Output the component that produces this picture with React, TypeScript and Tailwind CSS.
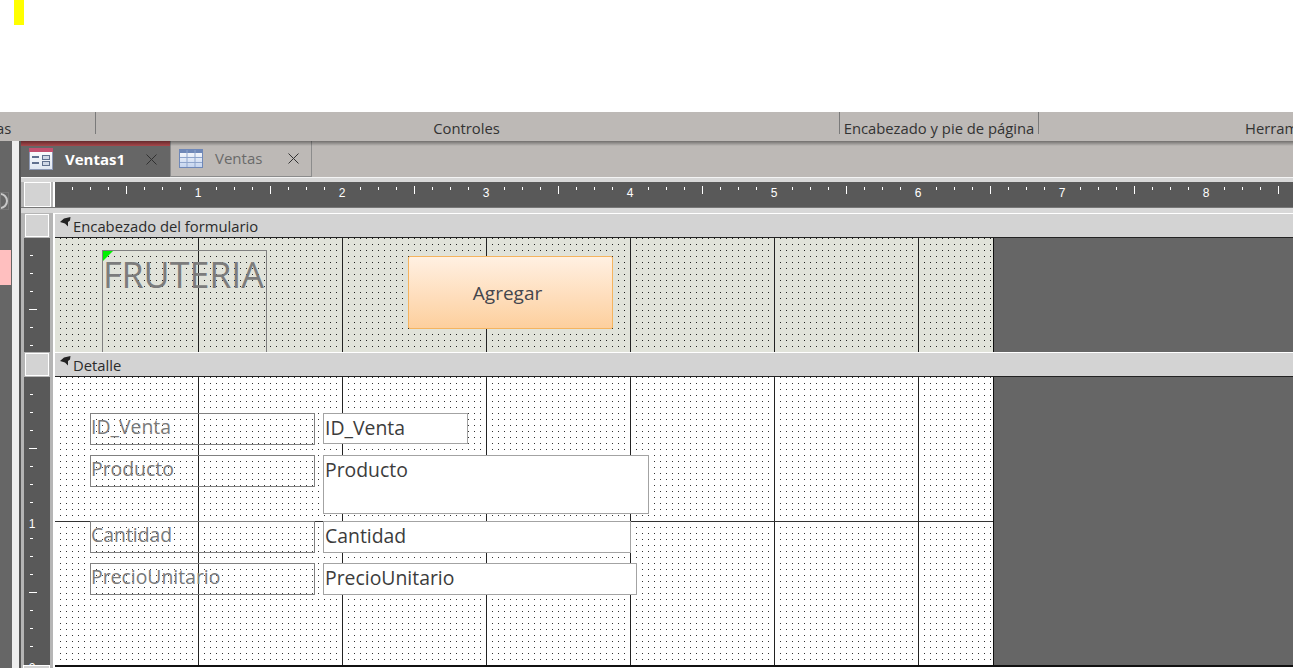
import React from "react";

const ui = "font-['Open_Sans','Noto_Sans',sans-serif]";
const dotsWhite =
  "bg-[linear-gradient(to_right,#ffffff_5px,transparent_5px),linear-gradient(to_bottom,#333333_1px,#ffffff_1px)] bg-[size:6px_6px]";
const dotsGreen =
  "bg-[linear-gradient(to_right,#e1e3da_5px,transparent_5px),linear-gradient(to_bottom,#222222_1px,#e1e3da_1px)] bg-[size:6px_6px]";

function TopRuler() {
  const ticks: React.ReactNode[] = [];
  for (let x = 72; x < 1293; x += 18) {
    const i = (x - 54) / 18;
    if (i % 8 === 0) {
      ticks.push(
        <text key={x} x={x - 55} y={15} fill="#fff" fontSize="12" textAnchor="middle" fontFamily="Liberation Sans, sans-serif">
          {(x - 54) / 144}
        </text>
      );
    } else if (i % 4 === 0) {
      ticks.push(<rect key={x} x={x - 55} y={4} width={1} height={8} fill="#fff" />);
    } else {
      ticks.push(<rect key={x} x={x - 55} y={5} width={1} height={3} fill="#fff" />);
    }
  }
  return (
    <svg width="1238" height="25" className="block bg-[#595959]">
      {ticks}
    </svg>
  );
}

function SideRuler({ height }: { height: number }) {
  const ticks: React.ReactNode[] = [];
  for (let k = 1; k * 18 - 1 <= height; k++) {
    const y = k * 18 - 1;
    if (k % 8 === 0) {
      ticks.push(
        <text key={k} x={8} y={y + 8} fill="#fff" fontSize="12" textAnchor="middle" fontFamily="Liberation Sans, sans-serif">
          {k / 8}
        </text>
      );
    } else if (k % 4 === 0) {
      ticks.push(<rect key={k} x={5} y={y} width={8} height={1} fill="#fff" />);
    } else {
      ticks.push(<rect key={k} x={6} y={y} width={3} height={1} fill="#fff" />);
    }
  }
  return (
    <svg width="26" height={height} className="block bg-[#595959]">
      {ticks}
    </svg>
  );
}

function SectionHeader({ title }: { title: string }) {
  return (
    <div className="flex h-[25px]">
      <div className="w-[34px] shrink-0 bg-[#b5b5b5] border-r-2 border-white pl-[4px] pt-[1px]">
        <div className="w-[24px] h-[23px] bg-[#d3d3d3] border border-white" />
      </div>
      <div className="relative flex-1 bg-[#d3d3d3] border-t border-t-white border-b border-b-[#222] flex items-center pl-[18px] pt-[2px] text-[14.8px] text-[#2b2b2b]">
        <svg width="11" height="10" viewBox="0 0 11 10" className="absolute left-[5px] top-[3px]">
          <path d="M0 5 L4 1.5 L10.5 0 L10 3.5 L8 5 L8 9.5 L5 6.5 Z" fill="#222" />
        </svg>
        <span className="leading-none">{title}</span>
      </div>
    </div>
  );
}

const lines =
  "absolute inset-0 pointer-events-none bg-[linear-gradient(to_right,transparent_143px,#222_143px,#222_144px,transparent_144px)] bg-[size:144px_100%]";

function Label({ text, top }: { text: string; top: number }) {
  return (
    <div
      className="absolute left-[35px] w-[225px] h-[32px] border border-[#808080] text-[19.4px] leading-[26px] text-[#7a7a7a] whitespace-nowrap"
      style={{ top }}
    >
      {text}
    </div>
  );
}

function Field({ text, top, width, height }: { text: string; top: number; width: number; height: number }) {
  return (
    <div
      className="absolute left-[268px] bg-white border border-[#a3a3a3] pl-[1px] text-[19.4px] leading-[28px] text-[#3c3c3c] whitespace-nowrap"
      style={{ top, width, height }}
    >
      {text}
    </div>
  );
}

export default function App() {
  return (
    <div className={`w-[1293px] h-[668px] overflow-hidden bg-white flex flex-col ${ui}`}>
      <div className="h-[112px] shrink-0">
        <div className="ml-[14px] w-[10px] h-[25px] bg-[#ffff00]" />
      </div>

      <div className="h-[29px] shrink-0 flex bg-[#bdb9b6] text-[14.8px] text-[#333] overflow-hidden">
        <div className="w-[96px] shrink-0 border-r border-[#7a7a7a] h-[22px]">
          <span className="block pt-[7px] -ml-[4px] leading-[19px]">as</span>
        </div>
        <div className="w-[744px] shrink-0 border-r border-[#7a7a7a] h-[22px] text-center">
          <span className="block pt-[7px] pr-[2px] leading-[19px]">Controles</span>
        </div>
        <div className="w-[199px] shrink-0 border-r border-[#7a7a7a] h-[22px] text-center whitespace-nowrap">
          <span className="block pt-[7px] leading-[19px]">Encabezado y pie de página</span>
        </div>
        <div className="flex-1 pl-[206px] whitespace-nowrap">
          <span className="block pt-[7px] leading-[19px]">Herramientas</span>
        </div>
      </div>

      <div className="flex-1 flex min-h-0">
        <div className="w-[21px] shrink-0 flex bg-[#eeeeee]">
          <div className="w-[12px] bg-[#666] flex flex-col">
            <div className="h-[51px] shrink-0" />
            <div className="w-[9px] h-[18px] border border-[#777] flex items-center justify-end overflow-hidden">
              <div className="w-[16px] h-[16px] rounded-full border-2 border-[#c8c8c8] shrink-0" />
            </div>
            <div className="h-[40px] shrink-0" />
            <div className="w-[11px] h-[35px] bg-[#ffbfbf]" />
          </div>
          <div className="w-[7px] bg-[#eeeeee]" />
          <div className="w-[2px] bg-[#555]" />
        </div>

        <div className="flex-1 flex flex-col min-w-0">
          {/* tabs */}
          <div className="h-[36px] shrink-0 flex bg-[#bdb9b6] relative">
            <div className="w-[149px] bg-[#666] border-t-[5px] border-[#a8474b] flex items-center text-white pl-[8px] pb-[5px]">
              <svg width="24" height="22" viewBox="0 0 24 22">
                <defs>
                  <linearGradient id="formFill" x1="0" y1="0" x2="0" y2="1">
                    <stop offset="0" stopColor="#ffffff" />
                    <stop offset="1" stopColor="#dfe6f2" />
                  </linearGradient>
                </defs>
                <rect x="0.5" y="0.5" width="23" height="21" fill="url(#formFill)" stroke="#8d99b5" />
                <rect x="0" y="0" width="24" height="4" fill="#c4506f" />
                <rect x="3" y="8" width="7" height="2" fill="#60708f" />
                <rect x="3" y="14" width="7" height="2" fill="#60708f" />
                <rect x="13.5" y="7.5" width="7" height="4" fill="#cfd7e6" stroke="#60708f" />
                <rect x="13.5" y="13.5" width="7" height="4" fill="#cfd7e6" stroke="#60708f" />
              </svg>
              <span className="ml-[12px] font-bold text-[15px]">Ventas1</span>
              <svg width="11" height="11" viewBox="0 0 11 11" className="ml-auto mr-[13px]">
                <path d="M0.5 0.5 L10.5 10.5 M10.5 0.5 L0.5 10.5" stroke="#303030" strokeWidth="1" />
              </svg>
            </div>
            <div className="w-[142px] border-x border-b border-[#8c8c8c] flex items-center pl-[8px] text-[#6a6a6a]">
              <svg width="24" height="19" viewBox="0 0 24 19">
                <defs>
                  <linearGradient id="gridFill" x1="0" y1="0" x2="0" y2="1">
                    <stop offset="0" stopColor="#ffffff" />
                    <stop offset="1" stopColor="#c3d3ee" />
                  </linearGradient>
                </defs>
                <rect x="0.5" y="0.5" width="23" height="18" fill="url(#gridFill)" stroke="#6f88b8" />
                <rect x="1" y="1" width="22" height="3" fill="#6f88b8" />
                <path d="M8 1 V18 M16 1 V18 M1 8.5 H23 M1 13.5 H23" stroke="#8fa5cc" strokeWidth="1" />
              </svg>
              <span className="ml-[12px] text-[15px]">Ventas</span>
              <svg width="11" height="11" viewBox="0 0 11 11" className="ml-auto mr-[12px]">
                <path d="M0.5 0.5 L10.5 10.5 M10.5 0.5 L0.5 10.5" stroke="#333" strokeWidth="1" />
              </svg>
            </div>
            <div className="absolute left-0 right-0 top-0 h-[5px] bg-gradient-to-b from-[#00000066] to-transparent pointer-events-none" />
          </div>

          {/* ruler row */}
          <div className="h-[36px] shrink-0 flex flex-col bg-[#d8d8d8]">
            <div className="h-[5px] border-t border-[#f4f4f4]" />
            <div className="h-[25px] flex">
              <div className="w-[34px] shrink-0 pl-[3px] bg-[#b5b5b5] border-r-2 border-white">
                <div className="w-[27px] h-[25px] bg-[#d3d3d3] border border-white" />
              </div>
              <TopRuler />
            </div>
            <div className="h-[6px] border-t border-[#777]" />
          </div>

          <SectionHeader title="Encabezado del formulario" />

          {/* form header */}
          <div className="flex h-[114px] shrink-0">
            <div className="w-[34px] shrink-0 bg-[#b5b5b5] border-r-2 border-white pl-[3px]">
              <SideRuler height={114} />
            </div>
            <div className="flex-1 bg-[#666] flex">
              <div className={`relative w-[939px] border-r border-[#111] ${dotsGreen}`}>
                <div className={lines} />
                <div className="absolute left-[47px] top-[12px] w-[165px] h-[102px] border border-b-0 border-[#808080] text-[35.8px] leading-[47px] text-[#7c7c7c] whitespace-nowrap">
                  <div className="absolute left-0 top-0 w-0 h-0 border-t-[10px] border-t-[#00f000] border-r-[10px] border-r-transparent" />
                  FRUTERIA
                </div>
                <div className="absolute left-[353px] top-[18px] w-[205px] h-[73px] rounded-[2px] border border-[#f5b45f] bg-gradient-to-b from-[#fff0e2] to-[#fdcf9d] flex items-center justify-center pr-[6px] pt-[2px] text-[19px] text-[#44464d]">
                  Agregar
                </div>
              </div>
            </div>
          </div>

          <SectionHeader title="Detalle" />

          {/* detail */}
          <div className="flex flex-1 min-h-0">
            <div className="w-[34px] shrink-0 bg-[#b5b5b5] border-r-2 border-white flex flex-col">
              <div className="pl-[3px]">
                <SideRuler height={288} />
              </div>
              <div className="ml-[2px] w-[27px] flex-1 bg-[#d3d3d3] border-t border-x border-white" />
            </div>
            <div className="flex-1 flex flex-col">
              <div className="h-[288px] shrink-0 bg-[#666] flex">
                <div className={`relative w-[939px] border-r border-[#111] ${dotsWhite}`}>
                  <div className={lines} />
                  <div className="absolute left-0 right-0 top-[144px] h-px bg-[#333]" />
                  <Label text="ID_Venta" top={36} />
                  <Label text="Producto" top={78} />
                  <Label text="Cantidad" top={144} />
                  <Label text="PrecioUnitario" top={186} />
                  <Field text="ID_Venta" top={36} width={145} height={31} />
                  <Field text="Producto" top={78} width={326} height={59} />
                  <Field text="Cantidad" top={144} width={308} height={32} />
                  <Field text="PrecioUnitario" top={186} width={314} height={32} />
                </div>
              </div>
              <div className="h-[2px] shrink-0 bg-[#111]" />
            </div>
          </div>
        </div>
      </div>
    </div>
  );
}
